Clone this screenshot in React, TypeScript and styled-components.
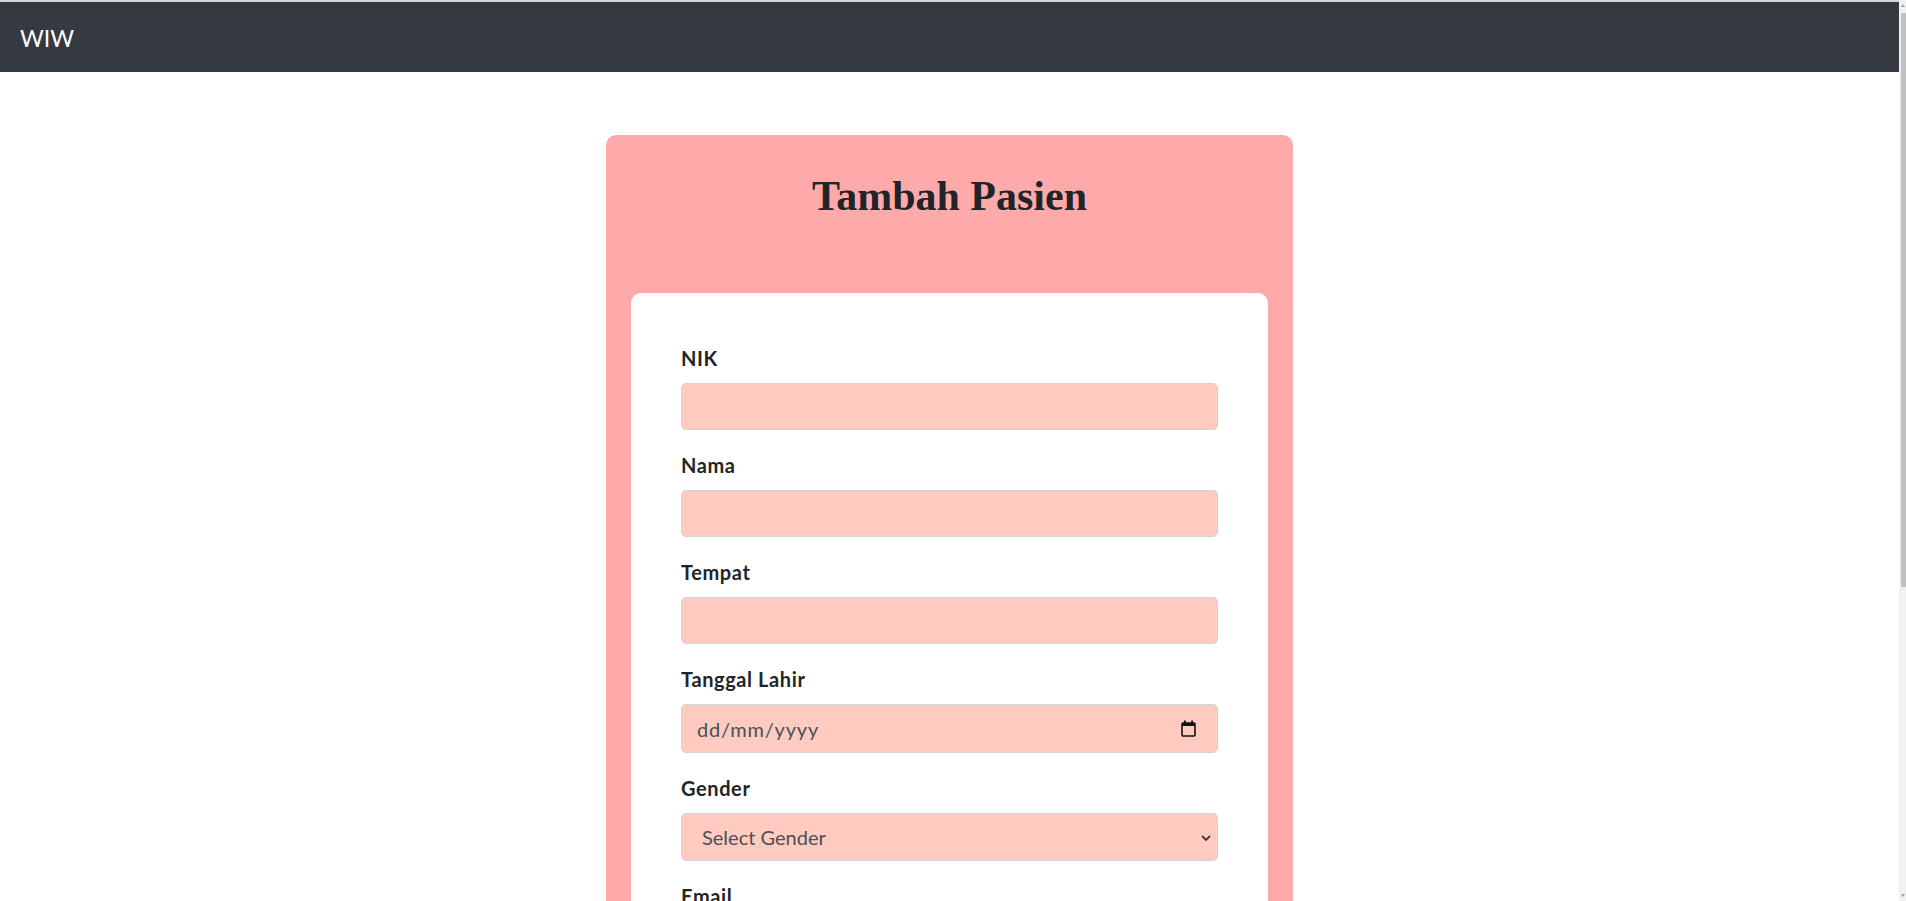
import React from "react";
import styled, { createGlobalStyle } from "styled-components";

const GlobalStyle = createGlobalStyle`
  html, body {
    margin: 0;
    padding: 0;
    overflow: hidden;
    background: #fff;
  }
  body {
    font-family: Lato, "Noto Sans", sans-serif;
    color: #212529;
  }
  * { box-sizing: border-box; }
`;

const Shell = styled.div`
  display: flex;
  height: 100vh;
`;

const Viewport = styled.div`
  flex: 1;
  min-width: 0;
  overflow-y: auto;
  scrollbar-width: none;
  &::-webkit-scrollbar { display: none; }
`;

const Rail = styled.div`
  display: flex;
  flex-direction: column;
  align-items: flex-end;
  width: 7px;
  background: #f1f1f1;
`;

const RailArrow = styled.div<{ $down?: boolean }>`
  width: 0;
  height: 0;
  margin: ${(p) => (p.$down ? "auto 1px 4px 0" : "4px 1px 0 0")};
  border-left: 2.5px solid transparent;
  border-right: 2.5px solid transparent;
  ${(p) => (p.$down ? "border-top: 3px solid #a3a3a3;" : "border-bottom: 3px solid #a3a3a3;")}
`;

const Thumb = styled.div`
  width: 5.5px;
  height: 574px;
  margin-top: 6px;
  background: #c1c1c1;
`;

const Navbar = styled.nav`
  display: flex;
  align-items: center;
  height: 72px;
  padding: 0 20px;
  border-top: 2px solid #d6d6d6;
  background: #343a40;
`;

const Brand = styled.a`
  color: #fff;
  font-size: 23px;
  line-height: 37.5px;
  text-decoration: none;
  padding-top: 3px;
`;

const Main = styled.main`
  display: flex;
  justify-content: center;
  padding: 63px 0 60px;
`;

const Card = styled.section`
  width: 687px;
  padding: 25px;
  background: #ffaaaa;
  border-radius: 10px;
`;

const Title = styled.h2`
  margin: 12px 0 73px;
  text-align: center;
  font-family: "Liberation Serif", "Times New Roman", serif;
  font-weight: 700;
  font-size: 42px;
  line-height: 48px;
  color: #212529;
`;

const Panel = styled.form`
  padding: 50px;
  background: #fff;
  border-radius: 10px;
`;

const Field = styled.div`
  margin-bottom: 20px;
`;

const Label = styled.label`
  display: block;
  margin-bottom: 10px;
  font-size: 20px;
  font-weight: 700;
  line-height: 30px;
  letter-spacing: 0.6px;
  color: #212529;
`;

const Input = styled.input`
  display: block;
  width: 100%;
  height: 47px;
  padding: 0 15px;
  border: 1px solid #ced4da;
  border-radius: 5px;
  background: #ffcac0;
  font-family: Lato, "Noto Sans", sans-serif;
  font-size: 20px;
  color: #495057;
  outline: none;
`;

const DateBox = styled.div`
  display: flex;
  align-items: center;
  justify-content: space-between;
  height: 49px;
  padding: 0 21px 0 15px;
  border: 1px solid #ced4da;
  border-radius: 5px;
  background: #ffcac0;
  font-size: 20px;
  letter-spacing: 0.8px;
  color: #495057;
`;

const SelectWrap = styled.div`
  position: relative;
`;

const Select = styled.select`
  display: block;
  width: 100%;
  height: 48px;
  padding: 0 30px 0 20px;
  border: 1px solid #ced4da;
  border-radius: 5px;
  background: #ffcac0;
  font-family: Lato, "Noto Sans", sans-serif;
  font-size: 20px;
  color: #495057;
  appearance: none;
  outline: none;
`;

const Chevron = styled.svg`
  position: absolute;
  right: 7px;
  top: 50%;
  margin-top: -2px;
  pointer-events: none;
`;

const Textarea = styled.textarea`
  display: block;
  width: 100%;
  height: 130px;
  padding: 8px 15px;
  border: 1px solid #ced4da;
  border-radius: 5px;
  background: #ffcac0;
  font-family: Lato, "Noto Sans", sans-serif;
  font-size: 20px;
  color: #495057;
  resize: none;
  outline: none;
`;

const SubmitButton = styled.button`
  height: 47px;
  padding: 0 22px;
  border: 0;
  border-radius: 5px;
  background: #343a40;
  color: #fff;
  font-family: Lato, "Noto Sans", sans-serif;
  font-size: 20px;
  cursor: pointer;
`;

const CalendarIcon = () => (
  <svg width="15" height="17" viewBox="0 0 15 17" fill="none">
    <rect x="1" y="3" width="13" height="13" rx="1" stroke="#111" strokeWidth="1.6" />
    <rect x="1" y="3" width="13" height="3" fill="#111" />
    <rect x="3" y="0.5" width="1.8" height="3" fill="#111" />
    <rect x="10.2" y="0.5" width="1.8" height="3" fill="#111" />
  </svg>
);

const textFields = [
  { id: "nik", label: "NIK" },
  { id: "nama", label: "Nama" },
  { id: "tempat", label: "Tempat" },
];

export default function App() {
  return (
    <>
      <GlobalStyle />
      <Shell>
        <Viewport>
          <Navbar>
            <Brand href="#">WIW</Brand>
          </Navbar>
          <Main>
            <Card>
              <Title>Tambah Pasien</Title>
              <Panel onSubmit={(e) => e.preventDefault()}>
                {textFields.map((f) => (
                  <Field key={f.id}>
                    <Label htmlFor={f.id}>{f.label}</Label>
                    <Input id={f.id} type="text" />
                  </Field>
                ))}
                <Field>
                  <Label>Tanggal Lahir</Label>
                  <DateBox>
                    <span>dd/mm/yyyy</span>
                    <CalendarIcon />
                  </DateBox>
                </Field>
                <Field>
                  <Label htmlFor="gender">Gender</Label>
                  <SelectWrap>
                    <Select id="gender" defaultValue="">
                      <option value="">Select Gender</option>
                      <option value="L">Laki-laki</option>
                      <option value="P">Perempuan</option>
                    </Select>
                    <Chevron width="10" height="6" viewBox="0 0 10 6">
                      <path d="M1 1l4 4 4-4" stroke="#3a3a3a" strokeWidth="1.8" fill="none" />
                    </Chevron>
                  </SelectWrap>
                </Field>
                <Field>
                  <Label htmlFor="email">Email</Label>
                  <Input id="email" type="email" />
                </Field>
                <Field>
                  <Label htmlFor="telp">No. Telepon</Label>
                  <Input id="telp" type="text" />
                </Field>
                <Field>
                  <Label htmlFor="alamat">Alamat</Label>
                  <Textarea id="alamat" />
                </Field>
                <SubmitButton type="submit">Simpan</SubmitButton>
              </Panel>
            </Card>
          </Main>
        </Viewport>
        <Rail>
          <RailArrow />
          <Thumb />
          <RailArrow $down />
        </Rail>
      </Shell>
    </>
  );
}
